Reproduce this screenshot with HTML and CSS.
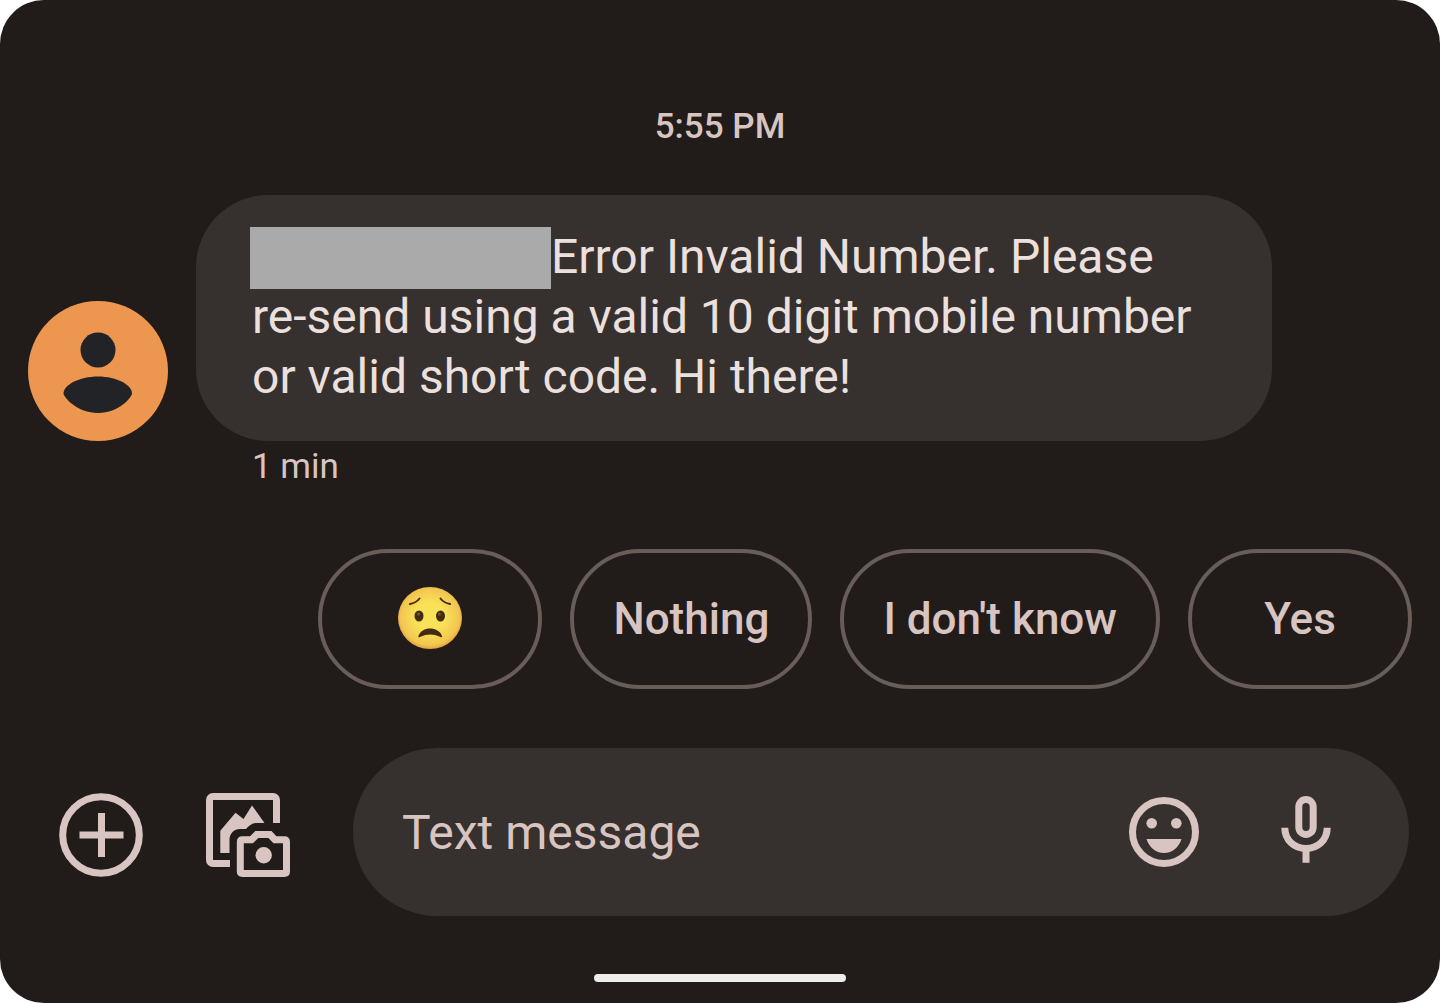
FILE: index.html
```html
<!DOCTYPE html>
<html lang="en">
<head>
<meta charset="utf-8">
<meta name="viewport" content="width=device-width, initial-scale=1">
<title>Messages</title>
<link rel="stylesheet" href="styles.css">
</head>
<body>
<main class="app">
  <time class="timestamp" datetime="17:55">5:55 PM</time>

  <section class="message">
    <svg class="avatar" viewBox="0 0 140 140" role="img" aria-label="Contact">
      <circle class="avatar-disc" cx="70" cy="70" r="70"/>
      <g class="avatar-person">
        <circle cx="70" cy="49" r="17.500"/>
        <path d="M70 75.500C89 75.500 104 84 104 92.500C104 96 91 112 70 112S35.500 96 35.500 92.500C35.500 84 51 75.500 70 75.500Z"/>
      </g>
    </svg>
    <p class="bubble"><span class="redacted"></span>Error Invalid Number. Please re-send using a valid 10 digit mobile number or valid short code. Hi there!</p>
    <p class="age">1 min</p>
  </section>

  <section class="replies">
    <button class="chip" type="button" aria-label="Worried face">
      <svg class="emoji" viewBox="0 0 64 64">
        <defs>
          <radialGradient id="face" cx="50%" cy="48%" r="54%">
            <stop offset="0.4" stop-color="#fae258"/>
            <stop offset="0.85" stop-color="#f1c650"/>
            <stop offset="1" stop-color="#e2933a"/>
          </radialGradient>
        </defs>
        <ellipse cx="32" cy="31" rx="32" ry="31" fill="url(#face)"/>
        <g fill="none" stroke="#432b12" stroke-width="2" stroke-linecap="round">
          <path d="M12 17Q18 16 21.500 11.500"/>
          <path d="M52 17Q46 16 42.500 11.500"/>
        </g>
        <g fill="#432b12">
          <ellipse cx="21" cy="29" rx="4.500" ry="5.500"/>
          <ellipse cx="42.500" cy="29" rx="4.500" ry="5.500"/>
          <path d="M20.500 49C22 44 27 41.500 32 41.500S42.500 44 44 49C44.500 50.500 43.500 50.500 42 49.700Q32 45.500 22.500 49.700C21 50.500 20 50.500 20.500 49Z"/>
        </g>
        <g fill="#7a5528">
          <circle cx="20.500" cy="27" r="1.500"/>
          <circle cx="41.500" cy="27" r="1.500"/>
        </g>
      </svg>
    </button>
    <button class="chip" type="button">Nothing</button>
    <button class="chip" type="button">I don't know</button>
    <button class="chip" type="button">Yes</button>
  </section>

  <form class="composer">
    <div class="attachments">
      <button class="icon-button" type="button" aria-label="Add attachment">
        <svg class="icon" viewBox="0 0 84 84">
          <circle class="line" cx="42" cy="42" r="38.300"/>
          <path class="line" d="M42.500 20V64M20.500 42H64.500"/>
        </svg>
      </button>
      <button class="icon-button" type="button" aria-label="Gallery and camera">
        <svg class="icon" viewBox="0 0 84 84">
          <path class="line" d="M70.500 30V7A3.500 3.500 0 0 0 67 3.500H7A3.500 3.500 0 0 0 3.500 7V67A3.500 3.500 0 0 0 7 70.500H24"/>
          <path class="fill" d="M14.300 37.700L29.500 19.700L37.500 26L46 12.500L58.500 30H51C46 30 43 32.500 40 36H34C28 36 23.500 40.500 23.500 47V60H14.300Z"/>
          <path class="line" d="M34.300 49Q34.300 46.800 36.500 46.800H45.500L50.800 41.500H64L69 46.800H78.300Q80.500 46.800 80.500 49V78.300Q80.500 80.500 78.300 80.500H36.500Q34.300 80.500 34.300 78.300Z"/>
          <circle class="fill" cx="57.700" cy="62.300" r="8.200"/>
        </svg>
      </button>
    </div>
    <div class="field">
      <input class="text" type="text" placeholder="Text message" aria-label="Text message">
      <button class="icon-button" type="button" aria-label="Emoji">
        <svg class="icon" viewBox="0 0 84 84">
          <circle class="line" cx="42" cy="42" r="31.500"/>
          <circle class="fill" cx="29.700" cy="33.300" r="5.300"/>
          <circle class="fill" cx="54.300" cy="33.300" r="5.300"/>
          <path class="fill" d="M24.500 49H59.500C57 57 50.500 63 42 63S27 57 24.500 49Z"/>
        </svg>
      </button>
      <button class="icon-button" type="button" aria-label="Voice message">
        <svg class="icon" viewBox="0 0 84 84">
          <rect class="line" x="34.800" y="9.500" width="14.400" height="35" rx="7.200"/>
          <path class="line" d="M20.800 37.700C20.800 50 30.300 58.500 42 58.500S63.200 50 63.200 37.700M42 58V72.700"/>
        </svg>
      </button>
    </div>
  </form>

  <div class="home-bar"></div>
</main>
</body>
</html>
```
FILE: styles.css
```css
* {
  box-sizing: border-box;
}

body {
  margin: 0;
  background: #ffffff;
  font-family: Roboto, "Liberation Sans", sans-serif;
  color: #d8c5c1;
}

p {
  margin: 0;
}

button,
input {
  font: inherit;
  color: inherit;
  background: none;
  border: 0;
  padding: 0;
}

.app {
  display: flex;
  flex-direction: column;
  min-height: 100vh;
  padding-top: 106px;
  border-radius: 44px;
  background: #211c1a;
}

.timestamp {
  align-self: center;
  font-size: 35px;
  font-weight: 500;
  line-height: 42px;
}

.message {
  display: grid;
  grid-template-columns: 140px 1fr;
  column-gap: 28px;
  margin-top: 47px;
  padding: 0 168px 0 28px;
}

.avatar {
  display: block;
  width: 140px;
  height: 140px;
  align-self: end;
}

.avatar-disc {
  fill: #ec9650;
}

.avatar-person {
  fill: #212327;
}

.bubble {
  padding: 32px 72px 34px 56px;
  border-radius: 72px;
  background: #36302e;
  color: #ece0de;
  font-size: 48px;
  line-height: 60px;
}

.redacted {
  display: inline-block;
  width: 301px;
  height: 62px;
  margin: 0 0 -2px -2px;
  vertical-align: top;
  background: #aaaaaa;
}

.age {
  grid-column: 2;
  padding: 5px 56px 0;
  font-size: 35px;
  line-height: 42px;
}

.replies {
  display: flex;
  justify-content: flex-end;
  gap: 28px;
  margin-top: 61px;
  padding: 0 28px;
}

.chip {
  display: flex;
  align-items: center;
  justify-content: center;
  min-width: 224px;
  height: 140px;
  padding: 0 39px;
  border: 4px solid #695d5a;
  border-radius: 70px;
  font-size: 44px;
  font-weight: 500;
  white-space: nowrap;
}

.emoji {
  width: 64px;
  height: 64px;
}

.composer {
  display: flex;
  align-items: center;
  gap: 63px;
  margin-top: 59px;
  padding: 0 31px 0 59px;
}

.attachments {
  display: flex;
  gap: 63px;
  padding-top: 6px;
}

.icon-button {
  flex: none;
  width: 84px;
  height: 84px;
}

.icon {
  display: block;
  width: 84px;
  height: 84px;
}

.line {
  fill: none;
  stroke: #d8c5c1;
  stroke-width: 7px;
}

.fill {
  fill: #d8c5c1;
}

.field {
  display: flex;
  flex: 1;
  align-items: center;
  gap: 58px;
  min-width: 0;
  height: 168px;
  padding: 0 61px 0 49px;
  border-radius: 84px;
  background: #36302e;
}

.text {
  flex: 1;
  min-width: 0;
  height: 84px;
  font-size: 48px;
  outline: none;
}

.text::placeholder {
  color: #d8c5c1;
  opacity: 1;
}

.home-bar {
  align-self: center;
  width: 252px;
  height: 8px;
  margin: auto 0 21px;
  border-radius: 4px;
  background: #efedec;
}
```
